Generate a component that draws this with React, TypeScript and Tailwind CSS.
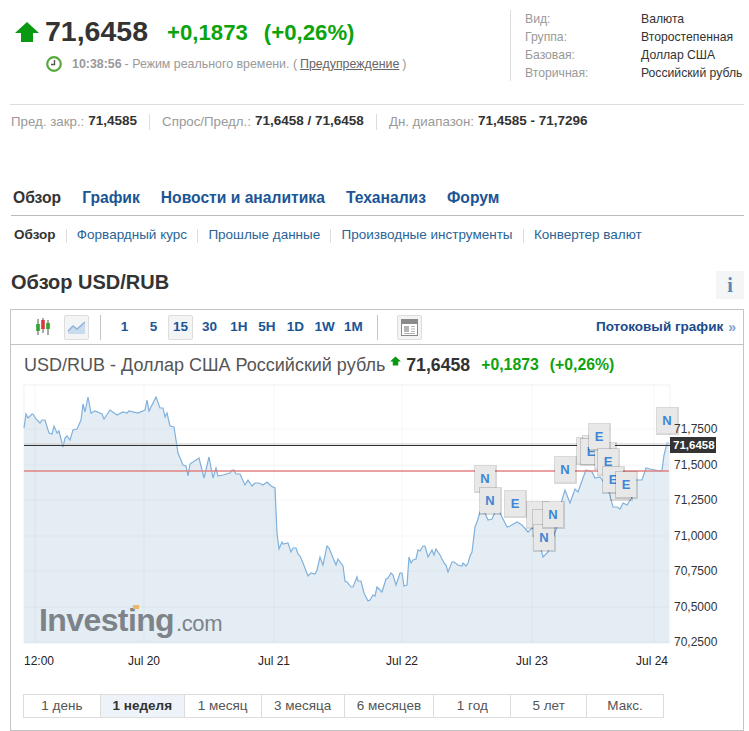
const PTS: [number, number][] = [[24,428],[26,414],[28,418],[32,414],[33,414],[36,419],[40,423],[42,420],[45,420],[49,433],[52,434],[54,426],[57,433],[59,431],[63,447],[65,438],[67,436],[70,440],[73,430],[77,429],[81,420],[83,404],[85,412],[88,397],[91,413],[95,411],[102,414],[104,419],[110,410],[117,415],[123,412],[127,413],[129,411],[138,413],[145,410],[147,400],[149,411],[156,397],[160,408],[163,408],[165,417],[167,413],[170,426],[174,427],[178,453],[183,465],[186,466],[188,476],[190,464],[199,458],[204,478],[209,457],[213,478],[216,468],[218,476],[223,475],[230,473],[232,470],[234,470],[236,474],[240,474],[245,485],[248,480],[252,486],[255,483],[259,483],[263,485],[267,482],[271,486],[275,488],[277,533],[279,549],[282,542],[283,544],[288,543],[291,552],[293,548],[296,548],[298,554],[300,556],[303,563],[308,576],[311,573],[315,574],[317,570],[320,557],[323,565],[327,546],[329,548],[336,565],[338,559],[343,566],[345,581],[347,582],[351,587],[353,587],[357,577],[358,581],[361,581],[364,593],[368,601],[370,600],[373,595],[375,596],[377,587],[382,592],[386,579],[388,578],[391,573],[393,575],[396,585],[400,573],[402,573],[404,586],[407,585],[409,557],[411,563],[413,560],[416,559],[418,550],[420,551],[423,546],[425,546],[428,557],[432,550],[434,555],[436,549],[440,555],[444,563],[446,565],[448,572],[452,562],[454,562],[458,565],[462,566],[463,563],[466,566],[468,563],[470,556],[472,552],[475,527],[477,522],[480,512],[485,513],[488,520],[492,519],[495,512],[500,513],[502,517],[507,527],[510,526],[517,522],[522,525],[528,532],[532,528],[537,533],[543,557],[548,552],[555,532],[557,527],[562,500],[565,490],[570,503],[575,489],[578,492],[583,478],[586,470],[592,472],[595,478],[600,477],[608,488],[613,507],[617,507],[620,509],[623,503],[627,505],[632,497],[635,480],[642,480],[646,468],[650,469],[660,471],[662,470],[664,455],[667,443],[669,443]];

const LINE = PTS.map((p) => p.join(",")).join(" ");
const AREA = `24,643 ${LINE} 669,643`;

const TILES: [string, number, number][] = [
  ["N",475,466],["N",480,488],["E",505,491],["",527,502],["",533,510],["N",534,525],["N",543,502],["N",555,457],
  ["",577,438],["",583,436],["E",581,439],["",595,443],["E",589,424],["E",598,449],["",611,474],["E",603,467],["E",616,472],["N",657,408],
];
const YLABELS: [string, number][] = [["71,7500",429],["71,5000",465],["71,2500",500],["71,0000",536],["70,7500",571],["70,5000",607],["70,2500",642]];
const XLABELS: [string, number][] = [["Jul 20",144],["Jul 21",274],["Jul 22",402],["Jul 23",532]];
const INFO = [["Вид:","Валюта"],["Группа:","Второстепенная"],["Базовая:","Доллар США"],["Вторичная:","Российский рубль"]];
const TABS = ["График","Новости и аналитика","Теханализ","Форум"];
const SUBS = ["Форвардный курс","Прошлые данные","Производные инструменты","Конвертер валют"];
const TF: [string, string][] = [["1","w-[29px]"],["5","w-[29px]"],["15","w-[25px]"],["30","w-[33px]"],["1H","w-[26px]"],["5H","w-[30px]"],["1D","w-[27px]"],["1W","w-[31px]"],["1M","w-[27px]"]];
const RANGES: [string, string][] = [["1 день","w-[77px]"],["1 неделя","w-[84px]"],["1 месяц","w-[77px]"],["3 месяца","w-[83px]"],["6 месяцев","w-[90px]"],["1 год","w-[77px]"],["5 лет","w-[76px]"],["Макс.","w-[76px]"]];

function Arrow({ className }: { className: string }) {
  return (
    <svg viewBox="0 0 24 20" className={className}>
      <polygon points="12,0 24,11 18,11 18,20 6,20 6,11 0,11" fill="#0a9a12" />
    </svg>
  );
}

function Chart() {
  return (
    <svg viewBox="11 380 731 310" className="block w-[731px] h-[310px]">
      <rect x="24" y="385" width="646" height="258" fill="#fff" stroke="#f0f1f4" />
      <polygon points={AREA} fill="#e4edf4" />
      {YLABELS.map(([l, y]) => <line key={l} x1="24" x2="669" y1={y} y2={y} stroke="#000" strokeOpacity="0.035" />)}
      {[35, 144, 274, 402, 532, 654].map((x) => <line key={x} x1={x} x2={x} y1="385" y2="643" stroke="#000" strokeOpacity="0.03" />)}
      <polyline points={LINE} fill="none" stroke="#80b1dc" strokeWidth="1.2" />
      <line x1="24" x2="670" y1="444" y2="444" stroke="#ccc" />
      <line x1="24" x2="670" y1="445.5" y2="445.5" stroke="#333" />
      <line x1="24" x2="669" y1="471" y2="471" stroke="#e28080" strokeWidth="1.5" />
      <text x="39" y="631" fontSize="32" fontWeight="700" fill="#7d8388" letterSpacing="-0.6">Investing</text>
      <text x="176" y="631" fontSize="22" fill="#7d8388" letterSpacing="-0.4">.com</text>
      <rect x="133" y="605" width="6" height="4" fill="#e8b765" />
      {TILES.map(([t, x, y], i) => (
        <g key={i}>
          <rect x={x - 1} y={y - 1} width="23" height="28" fill="#000" fillOpacity="0.15" />
          <rect x={x} y={y} width="20" height="25" fill="#e8e8e8" />
          {t ? <text x={x + 10} y={y + 17} textAnchor="middle" fontSize="13" fontWeight="700" fill="#3f87d6">{t}</text> : null}
        </g>
      ))}
      {YLABELS.map(([l, y]) => <text key={l} x="674" y={y + 4} fontSize="12" fill="#333">{l}</text>)}
      <rect x="670" y="437" width="46" height="16" fill="#333" />
      <text x="673" y="449" fontSize="11.5" fontWeight="700" fill="#fff">71,6458</text>
      <text x="24" y="665" fontSize="12" fill="#222">12:00</text>
      {XLABELS.map(([l, x]) => <text key={l} x={x} y="665" fontSize="12" textAnchor="middle" fill="#222">{l}</text>)}
      <text x="636" y="665" fontSize="12" fill="#222">Jul 24</text>
    </svg>
  );
}

export default function App() {
  return (
    <div className="relative w-[749px] h-[731px] overflow-hidden bg-white font-['Liberation_Sans',Arial,sans-serif] text-[#333]">
      {/* Quote header */}
      <div className="h-[104px] flex justify-between">
        <div className="pl-[15px] pt-[20px]">
          <div className="flex items-center h-[22px]">
            <Arrow className="w-[24px] h-[20px] mt-[1px]" />
            <span className="ml-[6px] text-[28.5px] font-bold leading-[22px]">71,6458</span>
            <span className="ml-[19px] text-[22.2px] font-bold leading-[22px] mt-[4px] text-[#0da30d]">+0,1873</span>
            <span className="ml-[16px] text-[22.2px] font-bold leading-[22px] mt-[4px] text-[#0da30d]">(+0,26%)</span>
          </div>
        </div>
        <div className="mt-[10px] mr-[5px] w-[234px] h-[71px] border-l border-[#ddd] pl-[14px] text-[12.2px] leading-[18px] whitespace-nowrap">
          {INFO.map(([a, b]) => (
            <div key={a} className="flex">
              <span className="w-[116px] text-[#999]">{a}</span>
              <span className="text-[#333]">{b}</span>
            </div>
          ))}
        </div>
      </div>
      <div className="absolute left-[46px] top-[55px] flex items-center text-[12.4px] text-[#999] whitespace-nowrap">
        <svg viewBox="0 0 16 16" className="w-[16px] h-[16px]">
          <circle cx="8" cy="8" r="6.8" fill="#fff" stroke="#58a83e" strokeWidth="2.2" />
          <path d="M8.5 4v4.5H5" fill="none" stroke="#555" strokeWidth="1.4" />
        </svg>
        <span className="ml-[10px] font-bold">10:38:56</span>
        <span className="ml-[3px]">- Режим реального времени. (</span>
        <span className="ml-[3px] underline text-[#666]">Предупреждение</span>
        <span className="ml-[3px]">)</span>
      </div>

      {/* Stats */}
      <div className="mx-[10px] w-[734px] h-[34px] border-t border-[#ddd] flex items-center pl-[1px] text-[13.3px] text-[#999] whitespace-nowrap">
        <span>Пред. закр.:</span>
        <b className="ml-[4px] text-[13.5px] text-[#333]">71,4585</b>
        <i className="mx-[12px] w-px h-[16px] bg-[#ddd]" />
        <span>Спрос/Предл.:</span>
        <b className="ml-[4px] text-[13.5px] text-[#333]">71,6458 / 71,6458</b>
        <i className="mx-[12px] w-px h-[16px] bg-[#ddd]" />
        <span>Дн. диапазон:</span>
        <b className="ml-[4px] text-[13.5px] text-[#333]">71,4585 - 71,7296</b>
      </div>

      {/* Tabs */}
      <div className="mt-[47px] mx-[11px] w-[733px] h-[31px] border-b border-[#bbb] flex items-start pt-[1px] pl-[2px] gap-[21px] text-[15.65px] font-bold leading-[24px] whitespace-nowrap">
        <span className="text-[#333]">Обзор</span>
        {TABS.map((t) => <span key={t} className="text-[#1a5596]">{t}</span>)}
      </div>
      <div className="h-[37px] pl-[14px] pt-[2px] flex items-center text-[13.5px] whitespace-nowrap">
        <b className="text-[#333]">Обзор</b>
        {SUBS.map((s) => (
          <span key={s} className="flex items-center text-[#2a6496]">
            <i className="mx-[10px] w-px h-[14px] bg-[#ddd]" />
            <span className="ml-[0.3px]">{s}</span>
          </span>
        ))}
      </div>

      {/* Heading */}
      <div className="mt-[13px] mx-[11px] w-[733px] h-[37px] flex items-center justify-between">
        <h2 className="text-[20px] font-bold text-[#333] pb-[6px]">Обзор USD/RUB</h2>
        <div className="w-[28px] h-[28px] bg-[#f4f5f7] flex items-center justify-center font-['Liberation_Serif',serif] font-bold text-[20px] text-[#5b86b5]">i</div>
      </div>

      {/* Chart panel */}
      <div className="ml-[10px] mt-[6px] w-[734px] h-[422px] border border-[#c4c4c4]">
        <div className="h-[35px] border-b border-[#c4c4c4] flex items-center whitespace-nowrap">
          <svg viewBox="0 0 16 18" className="ml-[24px] w-[16px] h-[18px]">
            <path d="M3 1v16M8 0v15M13 2v15" stroke="#555" strokeWidth="1" />
            <rect x="1.2" y="6" width="3.6" height="7" fill="#2ea52e" />
            <rect x="6.2" y="2" width="3.6" height="9" fill="#d83a3a" />
            <rect x="11.2" y="5" width="3.6" height="6" fill="#2ea52e" />
          </svg>
          <div className="ml-[13px] w-[25px] h-[25px] rounded-[2px] bg-[#f3f4f6] border border-[#ddd] flex items-center justify-center">
            <svg viewBox="0 0 19 16" className="w-[19px] h-[16px]">
              <path d="M1 12L6 7l4 3 8-7v12H1z" fill="#c8dcee" />
              <path d="M1 12L6 7l4 3 8-7" fill="none" stroke="#8fb5d8" strokeWidth="1.5" />
            </svg>
          </div>
          <i className="ml-[11px] w-px h-[25px] bg-[#c4c4c4]" />
          <div className="ml-[9px] flex items-center text-[13.5px] font-bold text-[#1a5596]">
            {TF.map(([t, w]) => (
              <span key={t} className={`${w} h-[25px] flex items-center justify-center rounded-[2px] ${t === "15" ? "bg-[#f3f4f6] border border-[#ddd]" : ""}`}>{t}</span>
            ))}
          </div>
          <i className="ml-[10px] w-px h-[25px] bg-[#c4c4c4]" />
          <div className="ml-[19px] w-[25px] h-[25px] rounded-[2px] bg-[#f3f4f6] border border-[#ddd] flex items-center justify-center">
            <svg viewBox="0 0 17 17" className="w-[17px] h-[17px]">
              <rect x="0.5" y="0.5" width="16" height="16" fill="#fff" stroke="#8a8a8a" />
              <rect x="1" y="1" width="15" height="4" fill="#8a8a8a" />
              <rect x="3" y="7" width="5" height="6" fill="#b5b5b5" />
              <path d="M10 7.5h4M10 10h4M10 12.5h4M3 14.5h11" stroke="#b5b5b5" />
            </svg>
          </div>
          <span className="ml-auto text-[13.5px] font-bold text-[#1a4b8c]">Потоковый график</span>
          <span className="ml-[5px] mr-[7px] text-[14px] font-bold text-[#7fa1c9]">»</span>
        </div>
        <div className="h-[35px] pl-[13px] pt-[5px] flex items-center whitespace-nowrap">
          <span className="text-[18px] text-[#555]">USD/RUB - Доллар США Российский рубль</span>
          <Arrow className="ml-[5px] w-[11px] h-[10px] -mt-[8px]" />
          <span className="ml-[5px] text-[17.7px] font-bold text-[#333]">71,6458</span>
          <span className="ml-[11px] text-[15.8px] font-bold text-[#0da30d]">+0,1873</span>
          <span className="ml-[11px] text-[15.8px] font-bold text-[#0da30d]">(+0,26%)</span>
        </div>
        <Chart />
        <div className="ml-[12px] mt-[4px] w-[641px] h-[24px] border border-[#ddd] flex text-[13.5px] text-[#555] whitespace-nowrap">
          {RANGES.map(([r, w], i) => (
            <span key={r} className={`${w} flex items-center justify-center ${i < 7 ? "border-r border-[#ddd]" : ""} ${i === 1 ? "bg-[#edf3f9] font-bold text-[#333]" : ""}`}>{r}</span>
          ))}
        </div>
      </div>
    </div>
  );
}
